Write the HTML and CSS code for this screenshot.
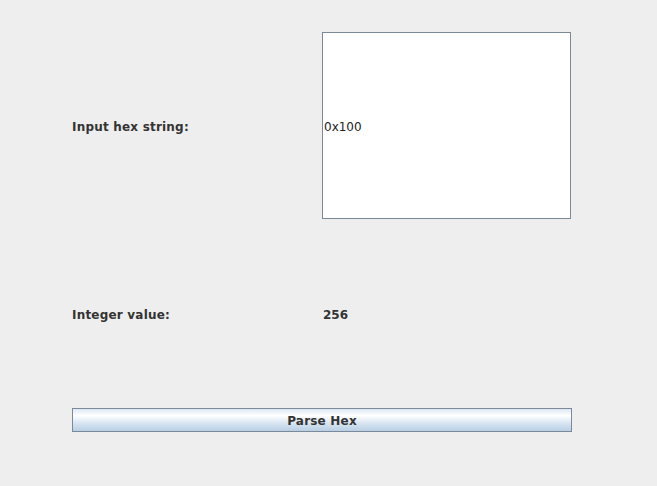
FILE: index.html
```html
<!DOCTYPE html>
<html>
<head>
<meta charset="utf-8">
<link rel="stylesheet" href="styles.css">
</head>
<body>
<div class="panel">
  <div class="row row-input">
    <div class="label">Input hex string:</div>
    <div class="field">0x100</div>
  </div>
  <div class="row row-result">
    <div class="label">Integer value:</div>
    <div class="value">256</div>
  </div>
  <button class="btn">Parse Hex</button>
</div>
</body>
</html>
```
FILE: styles.css
```css
html, body {
  margin: 0;
  padding: 0;
  background: #eeeeee;
  width: 657px;
  height: 486px;
  overflow: hidden;
}
.panel {
  padding: 32px 0 0 72px;
  display: flex;
  flex-direction: column;
  width: 500px;
  font-family: "DejaVu Sans", sans-serif;
  font-size: 12px;
  color: #333333;
}
.row {
  display: grid;
  grid-template-columns: 250px 250px;
  align-items: center;
}
.row-input {
  height: 187px;
}
.row-result {
  height: 189px;
}
.label {
  font-weight: bold;
  letter-spacing: 0.2px;
  padding-top: 2px;
}
.value {
  font-weight: bold;
  padding-left: 1px;
  padding-top: 2px;
}
.field {
  box-sizing: border-box;
  width: 249px;
  height: 187px;
  border: 1px solid #7a8a99;
  background: #ffffff;
  display: flex;
  align-items: center;
  padding-left: 1px;
  padding-top: 3px;
  font-weight: normal;
  color: #222222;
}
.btn {
  box-sizing: border-box;
  width: 500px;
  height: 24px;
  margin: 0;
  border: 1px solid #7a8a99;
  background: linear-gradient(#dde8f3 0%, #ffffff 30%, #dde8f3 60%, #b8cfe5 100%);
  font-family: "DejaVu Sans", sans-serif;
  font-size: 12px;
  font-weight: bold;
  letter-spacing: 0.2px;
  color: #333333;
  padding: 2px 0 0 0;
}
```
